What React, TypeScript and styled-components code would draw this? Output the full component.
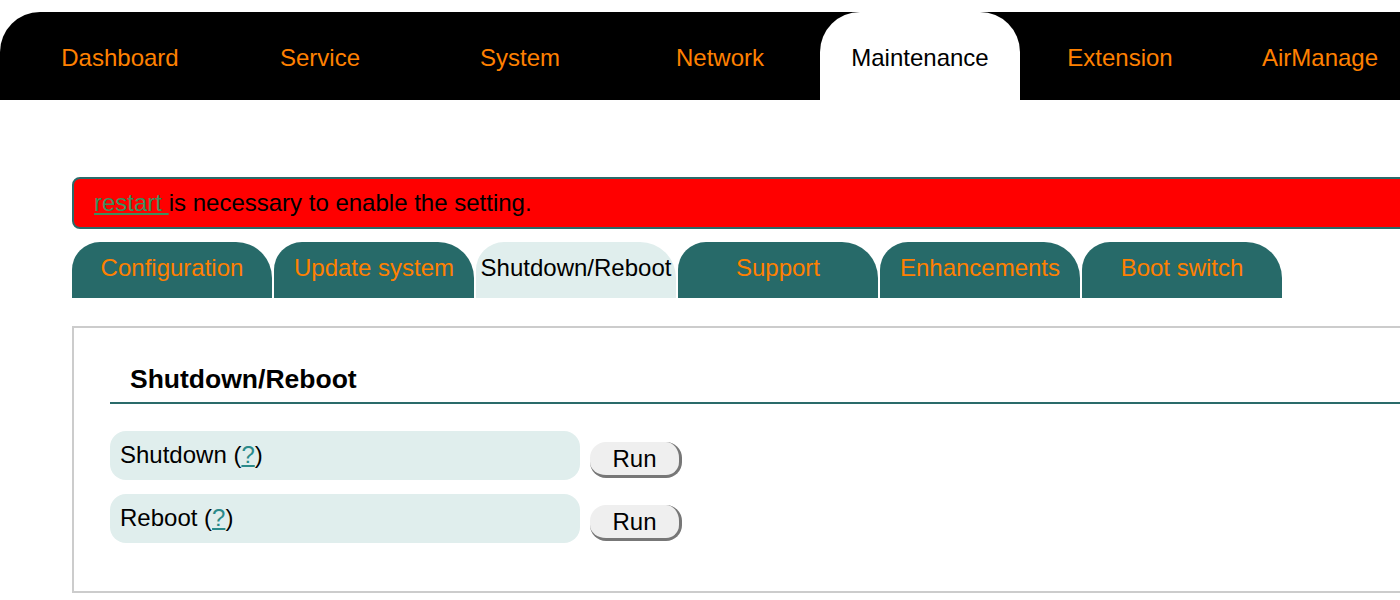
import styled, { createGlobalStyle } from 'styled-components';

const GlobalStyle = createGlobalStyle`
  html, body {
    margin: 0;
    padding: 0;
    background: #ffffff;
    overflow: hidden;
  }
  body {
    font-family: "Liberation Sans", Arial, Helvetica, sans-serif;
    color: #000;
  }
`;

const Page = styled.div`
  width: 1400px;
  height: 600px;
  overflow: hidden;
  padding-top: 12px;
  box-sizing: border-box;
`;

const NavBar = styled.nav`
  display: flex;
  width: 1460px;
  height: 88px;
  padding-left: 20px;
  box-sizing: border-box;
  background: #000;
  border-top-left-radius: 40px;
`;

const NavItem = styled.a<{ $active?: boolean }>`
  flex: 0 0 200px;
  display: flex;
  align-items: center;
  justify-content: center;
  padding-top: 4px;
  box-sizing: border-box;
  font-size: 24px;
  text-decoration: none;
  color: ${(p) => (p.$active ? '#000' : '#ff8000')};
  background: ${(p) => (p.$active ? '#fff' : 'transparent')};
  border-radius: ${(p) => (p.$active ? '40px 40px 0 0' : '0')};
  cursor: pointer;
`;

const Main = styled.main`
  width: 1360px;
  margin: 77px 0 0 72px;
  display: flex;
  flex-direction: column;
`;

const Alert = styled.div`
  height: 52px;
  display: flex;
  align-items: center;
  padding-left: 20px;
  box-sizing: border-box;
  background: #ff0000;
  border: 2px solid #2a6b6a;
  border-radius: 8px;
  font-size: 24px;
  color: #000;
  white-space: pre;
`;

const AlertLink = styled.a`
  color: #3a8f5e;
  text-decoration: underline;
`;

const SubTabs = styled.div`
  display: flex;
  gap: 2px;
  margin-top: 13px;
`;

const SubTab = styled.a<{ $active?: boolean }>`
  flex: 0 0 200px;
  height: 56px;
  display: flex;
  justify-content: center;
  padding-top: 12px;
  box-sizing: border-box;
  font-size: 24px;
  color: ${(p) => (p.$active ? '#000' : '#ff8000')};
  background: ${(p) => (p.$active ? '#e0eeed' : '#276a69')};
  border-radius: 28px 36px 0 0;
  text-decoration: none;
  white-space: nowrap;
  cursor: pointer;
`;

const Panel = styled.section`
  margin-top: 28px;
  height: 267px;
  box-sizing: border-box;
  border: 2px solid #cccccc;
  padding: 38px 0 0 36px;
`;

const PanelTitle = styled.h2`
  margin: 0;
  padding: 0 0 9px 20px;
  font-size: 26.5px;
  font-weight: bold;
  line-height: 27px;
  border-bottom: 2px solid #2a6b6a;
`;

const Rows = styled.div`
  display: flex;
  flex-direction: column;
  gap: 14px;
  margin-top: 27px;
`;

const Row = styled.div`
  display: flex;
  gap: 10px;
`;

const RowLabel = styled.div`
  width: 470px;
  height: 49px;
  display: flex;
  align-items: center;
  padding: 0 0 2px 10px;
  box-sizing: border-box;
  background: #e0eeed;
  border-radius: 16px;
  font-size: 24px;
`;

const HelpLink = styled.a`
  color: #2a8a8a;
  text-decoration: underline;
`;

const RunButton = styled.button`
  margin-top: 11px;
  width: 92px;
  height: 36px;
  box-sizing: border-box;
  font-family: inherit;
  font-size: 24px;
  color: #000;
  background: #efefef;
  border: none;
  border-right: 3px solid #777;
  border-bottom: 3px solid #777;
  border-radius: 16px;
  padding: 0;
  cursor: pointer;
`;

const navItems = ['Dashboard', 'Service', 'System', 'Network', 'Maintenance', 'Extension', 'AirManage'];
const subTabs = ['Configuration', 'Update system', 'Shutdown/Reboot', 'Support', 'Enhancements', 'Boot switch'];
const actions = ['Shutdown', 'Reboot'];

export default function App() {
  return (
    <>
      <GlobalStyle />
      <Page>
        <NavBar>
          {navItems.map((n) => (
            <NavItem key={n} $active={n === 'Maintenance'}>
              {n}
            </NavItem>
          ))}
        </NavBar>
        <Main>
          <Alert>
            <AlertLink>restart </AlertLink>is necessary to enable the setting.
          </Alert>
          <SubTabs>
            {subTabs.map((t) => (
              <SubTab key={t} $active={t === 'Shutdown/Reboot'}>
                {t}
              </SubTab>
            ))}
          </SubTabs>
          <Panel>
            <PanelTitle>Shutdown/Reboot</PanelTitle>
            <Rows>
              {actions.map((a) => (
                <Row key={a}>
                  <RowLabel>
                    {a}&nbsp;(<HelpLink>?</HelpLink>)
                  </RowLabel>
                  <RunButton>Run</RunButton>
                </Row>
              ))}
            </Rows>
          </Panel>
        </Main>
      </Page>
    </>
  );
}
